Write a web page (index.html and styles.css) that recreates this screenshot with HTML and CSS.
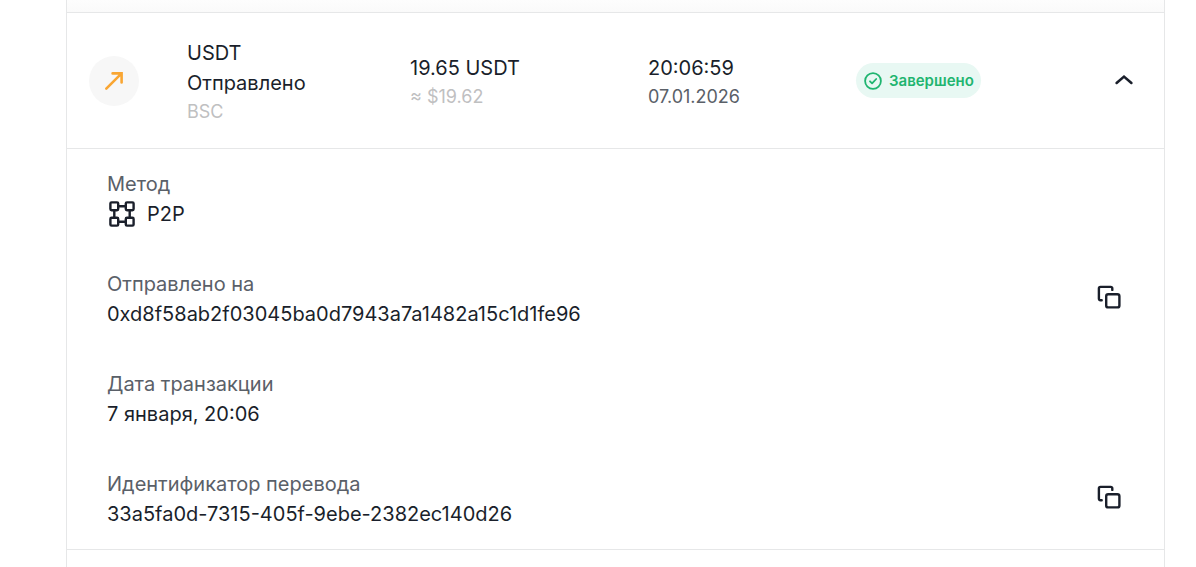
FILE: index.html
```html
<!DOCTYPE html>
<html lang="ru">
<head>
  <meta charset="UTF-8" />
  <meta name="viewport" content="width=device-width, initial-scale=1.0" />
  <title>История транзакций</title>
  <link rel="stylesheet" href="styles.css">
</head>
<body>
  <main class="history">
    <div class="history-head"></div>
    <div class="row">
      <div class="direction">
        <svg width="20" height="20" viewBox="0 0 20 20" fill="none" stroke="currentColor" stroke-width="2.6" stroke-linecap="round" stroke-linejoin="miter">
          <path d="M2.3 17.7 17.3 2.7M8.6 2.4h9v9" />
        </svg>
      </div>
      <div class="cell">
        <div>USDT</div>
        <div>Отправлено</div>
        <div class="small muted">BSC</div>
      </div>
      <div class="cell">
        <div>19.65 USDT</div>
        <div class="small muted">≈ $19.62</div>
      </div>
      <div class="cell">
        <div>20:06:59</div>
        <div class="small">07.01.2026</div>
      </div>
      <div>
        <span class="status">
          <svg width="18" height="18" viewBox="0 0 18 18" fill="none" stroke="currentColor" stroke-width="1.8" stroke-linecap="round" stroke-linejoin="round">
            <circle cx="9" cy="9" r="7.9" />
            <path d="m6 9.3 2.1 2.1L12.2 7" />
          </svg>
          Завершено
        </span>
      </div>
      <button class="icon-btn" aria-label="Свернуть" aria-expanded="true">
        <svg width="20" height="20" viewBox="0 0 20 20" fill="none" stroke="currentColor" stroke-width="2.6" stroke-linecap="round" stroke-linejoin="miter">
          <path d="m2.6 11.9 7.4-6.3 7.4 6.3" />
        </svg>
      </button>
    </div>

    <dl class="details">
      <div class="detail">
        <div>
          <dt>Метод</dt>
          <dd class="method">
            <svg width="30" height="30" viewBox="0 0 30 30" fill="none" stroke="currentColor" stroke-width="2.4">
              <rect x="3.4" y="3.4" width="7.8" height="7.8" rx="1.2" />
              <rect x="18.8" y="3.4" width="7.8" height="7.8" rx="1.2" />
              <rect x="3.4" y="18.8" width="7.8" height="7.8" rx="1.2" />
              <rect x="18.8" y="18.8" width="7.8" height="7.8" rx="1.2" />
              <path d="M11 7.3h8M11 22.7h8M7.3 11v8M22.7 11v8" />
            </svg>
            P2P
          </dd>
        </div>
      </div>
      <div class="detail">
        <div>
          <dt>Отправлено на</dt>
          <dd>0xd8f58ab2f03045ba0d7943a7a1482a15c1d1fe96</dd>
        </div>
        <button class="icon-btn copy" aria-label="Копировать адрес">
          <svg width="24" height="24" viewBox="0 0 24 24" fill="none" stroke="currentColor" stroke-width="2.4" stroke-linecap="round" stroke-linejoin="round">
            <rect x="9.2" y="9.2" width="13.2" height="13.2" rx="2" />
            <path d="M4.7 15.3H3.4A1.5 1.5 0 0 1 1.9 13.8V3.4A1.5 1.5 0 0 1 3.4 1.9H13.8A1.5 1.5 0 0 1 15.3 3.4V4.9" />
          </svg>
        </button>
      </div>
      <div class="detail">
        <div>
          <dt>Дата транзакции</dt>
          <dd>7 января, 20:06</dd>
        </div>
      </div>
      <div class="detail">
        <div>
          <dt>Идентификатор перевода</dt>
          <dd>33a5fa0d-7315-405f-9ebe-2382ec140d26</dd>
        </div>
        <button class="icon-btn copy" aria-label="Копировать идентификатор">
          <svg width="24" height="24" viewBox="0 0 24 24" fill="none" stroke="currentColor" stroke-width="2.4" stroke-linecap="round" stroke-linejoin="round">
            <rect x="9.2" y="9.2" width="13.2" height="13.2" rx="2" />
            <path d="M4.7 15.3H3.4A1.5 1.5 0 0 1 1.9 13.8V3.4A1.5 1.5 0 0 1 3.4 1.9H13.8A1.5 1.5 0 0 1 15.3 3.4V4.9" />
          </svg>
        </button>
      </div>
    </dl>
  </main>
</body>
</html>
```
FILE: styles.css
```css
* {
  box-sizing: border-box;
}
body {
  margin: 0;
  padding: 0 31px 0 66px;
  background: #fff;
  color: #1a1f2b;
  font-family: Inter, "Liberation Sans", sans-serif;
  font-size: 20px;
  line-height: 30px;
}
.history {
  min-height: 100vh;
  border: 1px solid #e6e7e8;
  border-width: 0 1px;
}
.history-head {
  height: 12px;
  background: linear-gradient(#fdfdfd, #fafafa);
}
.row {
  display: grid;
  grid-template-columns: 98px 223fr 238fr 208fr 258fr 20px;
  align-items: center;
  padding: 20px 30px 20px 22px;
  min-height: 137px;
  border: 1px solid #e6e7e8;
  border-width: 1px 0;
}
.direction {
  display: flex;
  align-items: center;
  justify-content: center;
  width: 50px;
  height: 50px;
  border-radius: 50%;
  background: #f7f7f7;
  color: #f9a633;
}
.cell {
  padding-top: 1px;
}
.small {
  font-size: 18px;
  line-height: 27px;
  color: #5a6068;
}
.muted {
  color: #bfc0c1;
}
.status {
  display: inline-flex;
  align-items: center;
  gap: 7px;
  height: 35px;
  padding: 0 7px 0 8px;
  border-radius: 18px;
  background: #e8f8f3;
  color: #1fb570;
  font-size: 15px;
  font-weight: 600;
  vertical-align: middle;
}
.icon-btn {
  display: flex;
  padding: 0;
  border: none;
  background: none;
  color: inherit;
  cursor: pointer;
}
.copy {
  padding-bottom: 4px;
}
.details {
  display: flex;
  flex-direction: column;
  gap: 40px;
  margin: 0;
  padding: 20px 43px 20px 40px;
  border-bottom: 1px solid #e6e7e8;
}
.detail {
  display: flex;
  align-items: center;
  justify-content: space-between;
}
dt {
  color: #5a6068;
}
dd {
  margin: 0;
}
.method {
  display: flex;
  align-items: center;
  gap: 10px;
}
```
